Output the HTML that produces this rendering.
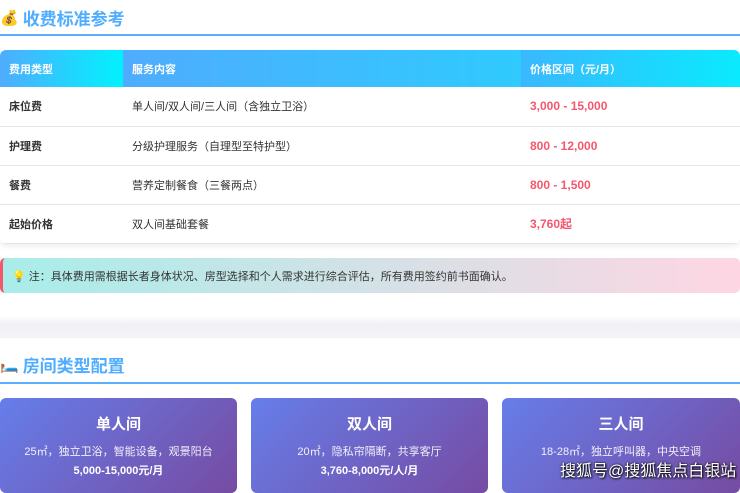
<!DOCTYPE html><html><head><meta charset="utf-8"><style>
*{margin:0;padding:0;box-sizing:border-box}
body{width:740px;height:485px;overflow:hidden;background:#fff;font-family:"Liberation Sans","Noto Sans CJK SC",sans-serif;position:relative}
.t{position:absolute;left:0;font-size:17px;font-weight:bold;color:#4facfe;display:flex;align-items:center;gap:4px}
.line{position:absolute;left:0;width:740px;height:2px;background:#5aaefc}
table{position:absolute;left:0;top:50px;width:740px;border-collapse:collapse;font-size:11px;box-shadow:0 2px 6px rgba(0,0,0,.08);border-radius:6px;overflow:hidden}
th{height:37px;color:#fff;text-align:left;padding-left:9px;font-weight:bold}
td{height:39px;padding-left:9px;border-bottom:1px solid #e6e6e6;color:#333}
td:first-child{font-weight:bold}
.p{color:#f5576c;font-weight:bold;font-size:12px}
.note{position:absolute;left:0;top:258px;width:740px;height:35px;background:linear-gradient(90deg,#a8ede9,#fed6e3);border-left:3px solid #f5576c;border-radius:5px;font-size:11px;color:#333;display:flex;align-items:center;padding-left:9px}
.band{position:absolute;left:0;top:316px;width:740px;height:22px;background:linear-gradient(#fff,#f0f0f5 40%,#f4f4f8)}
.card{position:absolute;top:398px;width:237px;height:95px;border-radius:6px;background:linear-gradient(135deg,#667eea,#764ba2);color:#fff;text-align:center}
.card h3{font-size:15px;margin-top:15px}
.card .d{font-size:11px;margin-top:9px;opacity:.9}
.card .pr{font-size:11px;font-weight:bold;margin-top:3px}
.wm{position:absolute;left:560px;top:457px;font-size:16px;color:#fff;text-shadow:0 0 2px #000,1px 1px 2px #000}
</style></head><body>
<div class="t" style="top:5px"><span style="font-size:15px">💰</span>收费标准参考</div>
<div class="line" style="top:34px"></div>
<table>
<tr><th style="width:123px;background:linear-gradient(90deg,#4facfe,#00f2fe)">费用类型</th><th style="width:398px;background:linear-gradient(90deg,#4facfe,#2fcafe)">服务内容</th><th style="background:linear-gradient(90deg,#3ab8fe,#0aeafe)">价格区间（元/月）</th></tr>
<tr><td>床位费</td><td>单人间/双人间/三人间（含独立卫浴）</td><td class="p">3,000 - 15,000</td></tr>
<tr><td>护理费</td><td>分级护理服务（自理型至特护型）</td><td class="p">800 - 12,000</td></tr>
<tr><td>餐费</td><td>营养定制餐食（三餐两点）</td><td class="p">800 - 1,500</td></tr>
<tr><td>起始价格</td><td>双人间基础套餐</td><td class="p">3,760起</td></tr>
</table>
<div class="note">💡 注：具体费用需根据长者身体状况、房型选择和个人需求进行综合评估，所有费用签约前书面确认。</div>
<div class="band"></div>
<div class="t" style="top:352px"><span style="font-size:15px">🛏️</span>房间类型配置</div>
<div class="line" style="top:382px"></div>
<div class="card" style="left:0"><h3>单人间</h3><div class="d">25㎡，独立卫浴，智能设备，观景阳台</div><div class="pr">5,000-15,000元/月</div></div>
<div class="card" style="left:251px"><h3>双人间</h3><div class="d">20㎡，隐私帘隔断，共享客厅</div><div class="pr">3,760-8,000元/人/月</div></div>
<div class="card" style="left:502px;width:238px"><h3>三人间</h3><div class="d">18-28㎡，独立呼叫器，中央空调</div><div class="pr">&nbsp;</div></div>
<div class="wm">搜狐号@搜狐焦点白银站</div>
</body></html>
